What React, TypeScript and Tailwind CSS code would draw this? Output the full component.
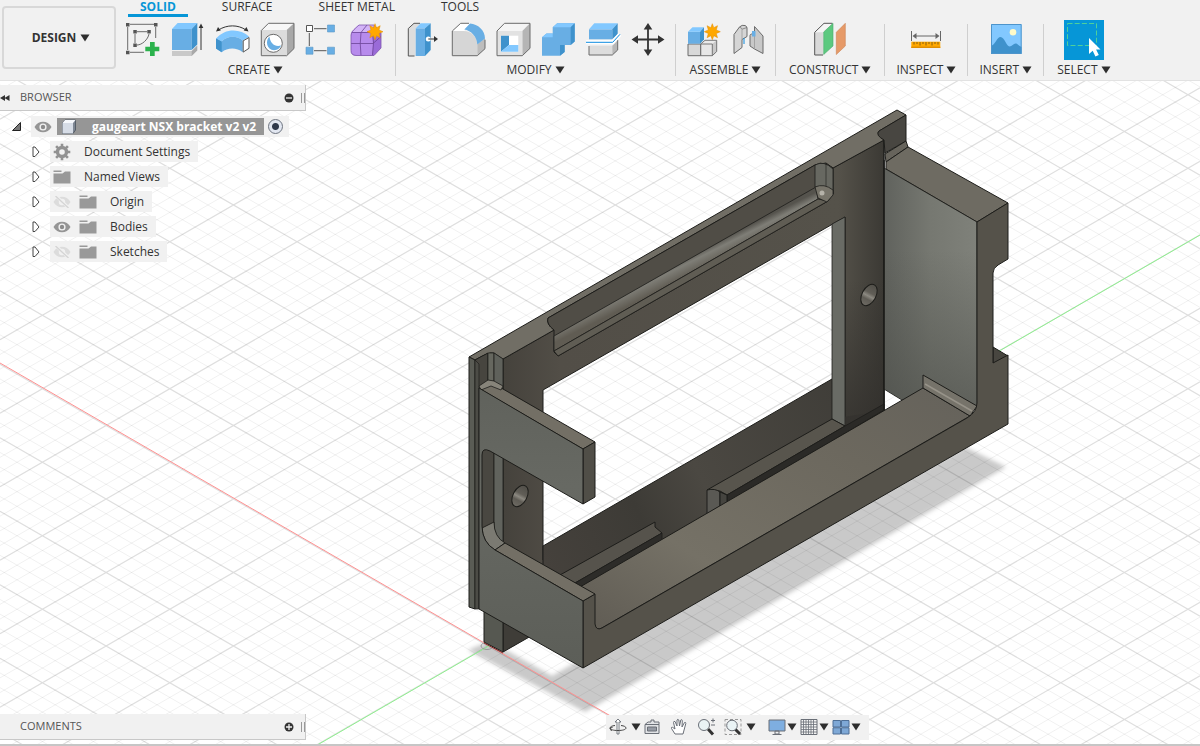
import { ReactElement, ReactNode } from "react";

const BLUE = "#68aee4";
const BLUE_TOP = "#82c8ff";
const BLUE_SIDE = "#3f92cc";
const LINE = "#6b6b6b";

interface IIconProps {
  children: ReactNode;
}

const ToolIcon = ({ children }: IIconProps): ReactElement => (
  <svg viewBox="0 0 36 36" className="w-9 h-9" fill="none" aria-hidden="true">
    {children}
  </svg>
);

const Star = ({ x, y }: { x: number; y: number }): ReactElement => (
  <path
    transform={`translate(${x} ${y})`}
    fill="#ffa800"
    stroke="#e08a00"
    strokeWidth=".5"
    d="M0-8 1.5-4 5.2-6 4-1.8 8 0 4 1.8 5.2 6 1.5 4 0 8-1.5 4-5.2 6-4 1.8-8 0-4-1.8-5.2-6-1.5-4Z"
  />
);

const Caret = (): ReactElement => (
  <svg viewBox="0 0 10 8" className="w-2.5 h-2 shrink-0" aria-hidden="true">
    <path d="M.5.5h9L5 7.5Z" fill="#2e2e2e" />
  </svg>
);

const createIcons = [
  {
    name: "Create Sketch",
    icon: (
      <ToolIcon>
        <path d="M5 2.300h24M2.700 5v23M5 30.300h14M30.700 5v11" stroke={LINE} />
        <path d="M12 9.700h10M10 12v9M24 12C23 17.500 17 23 12 23" stroke={LINE} />
        <path
          d="M1 1h3.500v3.500H1zM29 1h3.500v3.500H29zM1 28.700h3.500v3.500H1zM8.300 8h3.500v3.500H8.300zM22.300 8h3.500v3.500h-3.500zM8.300 21.500h3.500v3.500H8.300z"
          fill="#555"
        />
        <path d="M25 20h4.700v4.700h4.600v4.600h-4.600V34H25v-4.700h-4.700v-4.600H25z" fill="#2bb24c" />
      </ToolIcon>
    ),
  },
  {
    name: "Extrude",
    icon: (
      <ToolIcon>
        <path d="M2 29v5h19.700l5.600-5.600v-5L21.700 29z" fill="#a9a9a9" />
        <path d="M2 29v5h19.700v-5z" fill="#c9c9c9" />
        <path d="M2 7h19.700v21H2z" fill={BLUE} />
        <path d="m2 7 5.600-6h19.700l-5.600 6z" fill={BLUE_TOP} />
        <path d="m21.700 7 5.600-6v21.500l-5.600 5.500z" fill={BLUE_SIDE} />
        <path d="M31 28V5" stroke="#333" />
        <path d="m31 1.500 2.300 4.500h-4.600z" fill="#333" />
      </ToolIcon>
    ),
  },
  {
    name: "Revolve",
    icon: (
      <ToolIcon>
        <path d="M3.500 8C12 2.500 23 2.500 31 8" stroke="#333" />
        <path d="m1 9.500 2-4.500 2.800 3.500zM33.500 9.500l-2-4.500-2.800 3.500z" fill="#333" />
        <path d="M1 16.500C10 6 25 6 34.300 14.700L27.700 18.500c-6-5-15-5-21 1z" fill={BLUE_TOP} />
        <path d="M1 16.500 6.700 19.500c6-6 15-6 21-1v11.800c-6-5-15-5-21 0L1 26.500z" fill={BLUE} />
        <path d="m1 16.500 5.700 3v10.800L1 26.500z" fill={BLUE_SIDE} />
        <path d="m28.200 18.800 5.800-3.300v10.800l-5.800 3.800z" fill="#fff" stroke="#555" />
      </ToolIcon>
    ),
  },
  {
    name: "Hole",
    icon: (
      <ToolIcon>
        <path d="M1.300 8 8.500 1.300H34L26.700 8z" fill="#f7f7f7" />
        <path d="M26.700 8 34 1.300v25.200l-7.300 7.200z" fill="#a8a8a8" />
        <path d="M1.300 8h25.400v25.700H1.300z" fill="#dcdcdc" />
        <path d="M1.300 8.500 8.500 1.300H34v25.200l-7.300 7.200H1.300z" stroke={LINE} />
        <circle cx="13.300" cy="21.300" r="9" fill="#fff" stroke={LINE} />
        <path d="M9.500 14.500c-4.500 4-3 13.500 4.500 13.700 4 0 6-2.200 7-4.700-6 2-11-2.500-11.500-9Z" fill={BLUE} />
      </ToolIcon>
    ),
  },
  {
    name: "Rectangular Pattern",
    icon: (
      <ToolIcon>
        <path d="M9 6.700h12.500M4.300 11v13M9 28.700h12.500" stroke="#555" />
        <path d="M1.500 3.500h6v6h-6z" fill="#fff" stroke="#555" />
        <path d="M22.500 3h7v7h-7zM1 25.200h7v7H1zM22.500 25.200h7v7h-7z" fill={BLUE} stroke="#5a97c6" strokeWidth=".6" />
      </ToolIcon>
    ),
  },
  {
    name: "Create Form",
    icon: (
      <ToolIcon>
        <path d="M9 3h15l7 8v15l-7 7.500H6q-5 0-5-5V13q0-3 3-5.500Z" fill="#9a6bd8" />
        <path d="M9 3h15l-2 7.500H2L5.500 6Q7 3.500 9 3Z" fill="#d3b4f7" />
        <path d="M2 10.500h20q2 9 0 22.500H6.500q-5.500 0-5.500-5.500V14Z" fill="#b78bec" />
        <path d="M1 21.500h22l8-7M11 10.500q-1.500 11 0 23M11 10.500 17 3M22.500 10.500q2 10 0 22.500M2 10.500h20.500" stroke="#6c4497" strokeWidth=".8" />
        <path d="M9 3h15l7 8v15l-7 7.500H6q-5 0-5-5V13q0-3 3-5.500Z" stroke="#7f56ad" strokeWidth=".8" />
        <Star x={25} y={9.7} />
      </ToolIcon>
    ),
  },
];

const modifyIcons = [
  {
    name: "Press Pull",
    icon: (
      <ToolIcon>
        <path d="M3.300 6.500 9 1.300h6.700L10.500 6.500V34H3.300z" fill="#ddd" />
        <path d="M9.500 34H3.300V6.500L9 1.300h6" stroke="#555" />
        <path d="M10.700 6.300H20V34h-9.300z" fill={BLUE} />
        <path d="m10.700 6.300 5-5h10l-5.700 5z" fill={BLUE_TOP} />
        <path d="m20 6.300 5.700-5V28L20 34z" fill={BLUE_SIDE} />
        <circle cx="23.300" cy="17" r="2.500" fill="#fff" />
        <path d="M23.300 17H30" stroke="#333" />
        <path d="M33 17l-4-3v6z" fill="#333" />
      </ToolIcon>
    ),
  },
  {
    name: "Fillet",
    icon: (
      <ToolIcon>
        <path d="M2.300 9 10.700 1.300H20L14.300 9z" fill="#fff" />
        <path d="M2.300 9h11c8 0 14 6 14 13.500v11.200h-25z" fill="#d6d6d6" />
        <path d="m27.300 22.300 7.700-6v10.400l-7.700 7z" fill="#bdbdbd" />
        <path d="m14.300 7.500 5.700-6c8 .5 15 7 15 15l-7.700 6C27 14.500 21 8.500 14.300 7.500Z" fill={BLUE} />
        <path d="M19 1.300h-8.300L2.300 9v24.700h25l7.700-7v-9" stroke={LINE} />
      </ToolIcon>
    ),
  },
  {
    name: "Shell",
    icon: (
      <ToolIcon>
        <path d="M2 9 9.500 1.300H35L27.300 9z" fill="#f5f5f5" />
        <path d="M27.300 9 35 1.300v25l-7.700 7.400z" fill="#b5b5b5" />
        <path d="M2 9h25.300v24.700H2z" fill="#e2e2e2" />
        <path d="M2 9 9.500 1.300H35v25l-7.700 7.400H2z" stroke={LINE} />
        <path d="M6 13.700h17.300v16H6z" fill="#fff" />
        <path d="M6 13.700h8V23l-8 6.700z" fill={BLUE_SIDE} />
        <path d="M14 23h9.300v6.700H6z" fill={BLUE_TOP} />
      </ToolIcon>
    ),
  },
  {
    name: "Combine",
    icon: (
      <ToolIcon>
        <path d="m2 15.300 4.500-3.800h6.200V5.300l4.500-4h17.500v18.200L30.700 23h-6.200v7L20 33.700H2z" fill={BLUE} />
        <path d="m12.700 5.300 4.500-4h17.500l-4 4zM2 15.300l4.500-3.800h6.200v3.800z" fill={BLUE_TOP} />
        <path d="m30.700 5.300 4-4v18.200l-4 3.500zM20 23h4.700v7L20 33.700z" fill={BLUE_SIDE} />
      </ToolIcon>
    ),
  },
  {
    name: "Split Body",
    icon: (
      <ToolIcon>
        <path d="M4 7.300h23.300v10H4z" fill={BLUE} />
        <path d="m4 7.300 5.300-6h23.400l-5.400 6z" fill={BLUE_TOP} />
        <path d="m27.300 7.300 5.400-6V12l-5.400 5.300z" fill={BLUE_SIDE} />
        <path d="M4 23.700h23.300V33H4z" fill="#ddd" />
        <path d="m27.300 23.700 5.400-5.500V28l-5.400 5z" fill="#b7b7b7" />
        <path d="M4 24v9h23.300l5.400-5V18" stroke={LINE} />
        <path d="M1 20.300h26.700L35 12.300" stroke="#fff" strokeWidth="4" />
        <path d="M1 20.300h26.700L35 12.300" stroke="#0d8be0" />
      </ToolIcon>
    ),
  },
  {
    name: "Move/Copy",
    icon: (
      <ToolIcon>
        <path d="M18 5v25M5 17.500h26" stroke="#333" strokeWidth="1.800" />
        <path d="m18 1 4.300 6.500h-8.600zM18 34l4.300-6.500h-8.600zM1.500 17.500 8 13.200v8.600zM34.500 17.500 28 13.200v8.600z" fill="#333" />
      </ToolIcon>
    ),
  },
];

const assembleIcons = [
  {
    name: "New Component",
    icon: (
      <ToolIcon>
        <path d="M3 22h12.700v11.700H3z" fill="#d8d8d8" stroke={LINE} />
        <path d="m15.700 22 4.300-3.700h11.700L27.300 22z" fill="#f7f7f7" />
        <path d="m27.300 22 4.400-3.700v11.200l-4.400 4.200z" fill="#b5b5b5" />
        <path d="M15.700 22h11.600v11.700H15.700zM15.700 22l4.300-3.700h11.700v11.200l-4.400 4.200" fill="#dedede" fillOpacity=".5" stroke={LINE} strokeWidth=".9" />
        <path d="M3 9.700h12v12H3z" fill={BLUE} />
        <path d="M3 9.700 7.500 5.300H19l-4 4.400z" fill={BLUE_TOP} />
        <path d="m15 9.700 4-4.400v12.200l-4 4.200z" fill={BLUE_SIDE} />
        <Star x={27.3} y={9.7} />
      </ToolIcon>
    ),
  },
  {
    name: "Joint",
    icon: (
      <ToolIcon>
        <path d="M4 12.500 9.500 5Q12 2.500 15 3.500q2 .8 2 2.500v8.500l-5 3v8L4 31.500z" fill="#d5d5d5" stroke={LINE} />
        <path d="M12 7v10.500" stroke="#999" strokeWidth=".8" />
        <path d="m9.500 5 3 2 4.500-1.500" stroke={LINE} strokeWidth=".7" />
        <path d="M20 13.500q0-2 4.500-1.500V4.500l8.500 9.500v17.500L24.500 27 20 24z" fill="#c8c8c8" stroke={LINE} />
        <path d="M24.500 12v15" stroke="#999" strokeWidth=".8" />
        <path d="M22 9h3.500v5.500H22z" fill={BLUE} />
        <path d="M14 16v6" stroke="#0d8be0" />
      </ToolIcon>
    ),
  },
];

const constructIcons = [
  {
    name: "Offset Plane",
    icon: (
      <ToolIcon>
        <path d="M2.700 10.300 12 1.300h8.500L11 10.300V33H2.700z" fill="#f5f5f5" />
        <path d="M2.700 10.300H11V33H2.700z" fill="#d9d9d9" />
        <path d="M11 33H2.700V10.300l9.300-9h8.500" stroke="#555" />
        <path d="M11.700 10 21 1.300V24l-9.300 8.500z" fill="#5cc97f" stroke="#49a869" strokeWidth=".6" />
        <path d="M24.300 10.300 33.300 1.300V24l-9 8.500z" fill="#e69a68" stroke="#cb8354" strokeWidth=".6" />
      </ToolIcon>
    ),
  },
];

const inspectIcons = [
  {
    name: "Measure",
    icon: (
      <ToolIcon>
        <path d="M3.500 9v10M32.500 9v10M6 14h24" stroke="#666" />
        <path d="m4.500 14 4-3v6zM31.500 14l-4-3v6z" fill="#666" />
        <path d="M3.300 19.700h29v6.300h-29z" fill="#ffa800" />
        <path d="M3.300 25.300h29" stroke="#df8d00" strokeWidth="1.400" />
        <path d="M6 20v2.500M9 20v2M12 20v3.500M15 20v2M18 20v3.500M21 20v2M24 20v3.500M27 20v2M30 20v2.500" stroke="#6b4c10" strokeWidth=".8" />
      </ToolIcon>
    ),
  },
];

const insertIcons = [
  {
    name: "Canvas",
    icon: (
      <ToolIcon>
        <path d="M3 2h30.500v30H3z" fill="#82c8ff" />
        <path d="M3 24c4-1 6-9 9.500-9 4 0 6 9.500 9 9.500 2.500 0 4-3 6-3s3 2.500 6 3.500v7H3z" fill={BLUE_SIDE} />
        <circle cx="25" cy="10.300" r="3.300" fill="#fffbc9" />
        <path d="M3.500 2.500h29.700v29H3.500z" stroke="#4d94cb" />
      </ToolIcon>
    ),
  },
];

const selectIcons = [
  {
    name: "Select",
    icon: (
      <svg viewBox="0 0 40 40" className="w-10 h-10" fill="none" aria-hidden="true">
        <path d="M0 0h40v40H0z" fill="#0696d7" />
        <path d="M3.500 3.500h29v22h-29z" stroke="#4fd09a" strokeDasharray="5 2.200" />
        <path d="M25 18v16l3.700-3.200 2.700 5.700 3.400-1.600-2.700-5.500h4.400z" fill="#fff" />
      </svg>
    ),
  },
];

const groups = [
  { label: "CREATE", tools: createIcons, pad: "px-[9px]" },
  { label: "MODIFY", tools: modifyIcons, pad: "px-[9px]" },
  { label: "ASSEMBLE", tools: assembleIcons, pad: "px-[9px]" },
  { label: "CONSTRUCT", tools: constructIcons, pad: "px-[13px]" },
  { label: "INSPECT", tools: inspectIcons, pad: "px-[11px]" },
  { label: "INSERT", tools: insertIcons, pad: "px-[11px]" },
  { label: "SELECT", tools: selectIcons, pad: "px-[13px]" },
];

const tabs = ["SOLID", "SURFACE", "SHEET METAL", "TOOLS"];

const Toolbar = (): ReactElement => {
  return (
    <header className="flex bg-[#f1f1f1] border-b border-[#e2e2e2] text-xs text-[#333] relative z-10">
      <button className="ml-0.5 mt-1.5 mb-[11px] w-[114px] h-[63px] shrink-0 rounded border-2 border-[#d8d8d8] flex items-center justify-center gap-1 pl-1 font-bold">
        DESIGN <Caret />
      </button>
      <div className="flex flex-col whitespace-nowrap">
        <nav className="flex gap-[22px] ml-3 h-[17px]">
          {tabs.map((tab, i) => (
            <button
              key={tab}
              className={
                i === 0
                  ? "px-3 leading-[14px] border-b-[3px] border-[#0696d7] text-[#0696d7] font-bold"
                  : "px-3 leading-[14px] border-b-[3px] border-transparent"
              }
            >
              {tab}
            </button>
          ))}
        </nav>
        <div className="flex items-center pt-[3px]">
          {groups.map(({ label, tools, pad }, i) => (
            <div key={label} className="flex items-center">
              {i > 0 && <div className="w-px h-[52px] bg-[#cfcfcf]" />}
              <div className={`flex flex-col items-center ${pad}`}>
                <div className="flex items-center gap-[9px] h-10">
                  {tools.map(({ name, icon }) => (
                    <button key={name} aria-label={name}>
                      {icon}
                    </button>
                  ))}
                </div>
                <button className="flex items-center gap-[3px] h-[19px] leading-[19px]">
                  {label} <Caret />
                </button>
              </div>
            </div>
          ))}
        </div>
      </div>
    </header>
  );
};

const Eye = (): ReactElement => (
  <svg viewBox="0 0 18 12" className="w-[18px] h-3" aria-hidden="true">
    <path d="M.5 6C4-1 14-1 17.500 6 14 13 4 13 .5 6Z" fill="#959595" />
    <circle cx="9" cy="6" r="3.600" fill="#f1f1f1" />
    <circle cx="9" cy="6" r="2.200" fill="#8b8b8b" />
  </svg>
);

const EyeOff = (): ReactElement => (
  <svg viewBox="0 0 18 12" className="w-[18px] h-3" aria-hidden="true">
    <path d="M.5 6C4-1 14-1 17.500 6 14 13 4 13 .5 6Z" fill="#dcdcdc" />
    <circle cx="9" cy="6" r="3.200" fill="#f1f1f1" />
    <path d="m3 0 13 12" stroke="#f1f1f1" strokeWidth="3" />
    <path d="m2.500 0 13 12" stroke="#d4d4d4" strokeWidth="1.300" />
  </svg>
);

const Folder = (): ReactElement => (
  <svg viewBox="0 0 18 14" className="w-[18px] h-3.5" aria-hidden="true">
    <path d="M.5 3.500h9L12 1.500h5.500v12H.5z" fill="#999" />
    <path d="M.5.5h8v1.500h-8z" fill="#999" />
  </svg>
);

const Gear = (): ReactElement => (
  <svg viewBox="0 0 18 18" className="w-[18px] h-[18px]" fill="none" stroke="#929292" aria-hidden="true">
    <circle cx="9" cy="9" r="4.500" strokeWidth="3.400" />
    <path
      d="M9 .7v3M9 14.300v3M.7 9h3M14.300 9h3M3.100 3.100l2.200 2.200M12.700 12.700l2.200 2.200M3.100 14.900l2.200-2.200M12.700 5.300l2.200-2.200"
      strokeWidth="2.600"
    />
  </svg>
);

const Expand = (): ReactElement => (
  <button aria-label="Expand" className="w-[19px] flex items-center pl-px">
    <svg viewBox="0 0 8 12" className="w-2 h-3" aria-hidden="true">
      <path d="M1 1v9.500h2L7 6 3 1z" fill="#fff" stroke="#444" />
    </svg>
  </button>
);

const nodes = [
  { label: "Document Settings", icon: <Gear />, eye: null },
  { label: "Named Views", icon: <Folder />, eye: null },
  { label: "Origin", icon: <Folder />, eye: <EyeOff /> },
  { label: "Bodies", icon: <Folder />, eye: <Eye /> },
  { label: "Sketches", icon: <Folder />, eye: <EyeOff /> },
];

const PanelBar = ({ title, open }: { title: string; open: boolean }): ReactElement => (
  <div className="w-[306px] h-[26px] bg-[#f1f1f1] border-r border-b border-[#c8c8c8] flex items-center text-[11px] text-[#555]">
    <div className="w-5">
      {open && (
        <svg viewBox="0 0 10 8" className="w-2.5 h-2" aria-hidden="true">
          <path d="M5 1v6L0 4zM9.500 1v6l-5-3z" fill="#333" />
        </svg>
      )}
    </div>
    <h2 className="flex-1">{title}</h2>
    <button aria-label={open ? `Collapse ${title}` : `Expand ${title}`}>
      <svg viewBox="0 0 10 10" className="w-2.5 h-2.5" aria-hidden="true">
        <circle cx="5" cy="5" r="4.500" fill="#333" />
        <path d={open ? "M2 5h6" : "M2 5h6M5 2v6"} stroke="#f1f1f1" strokeWidth="1.300" />
      </svg>
    </button>
    <div className="w-1 h-2.5 ml-[7px] border-x border-[#999]" />
  </div>
);

const Browser = (): ReactElement => (
  <aside className="w-[306px] text-xs text-[#333]">
    <PanelBar title="BROWSER" open />
    <ul className="mt-[5px] flex flex-col gap-1">
      <li className="flex items-center h-[21px]">
        <button aria-label="Collapse" className="w-[31px] flex pl-3">
          <svg viewBox="0 0 9 9" className="w-[9px] h-[9px]" aria-hidden="true">
            <path d="M8.500.5v8h-8z" fill="#777" stroke="#222" />
          </svg>
        </button>
        <div className="flex items-center h-full bg-[#f1f1f1] pl-[3px] pr-1.5">
          <button aria-label="Hide component">
            <Eye />
          </button>
          <span className="flex items-center h-[17px] ml-[5px] pl-1 pr-2 bg-[#969696] text-white font-bold whitespace-nowrap">
            <svg viewBox="0 0 16 16" className="w-4 h-4 mr-[15px]" aria-hidden="true">
              <path d="M1.500 4 4 1h10.500v10L12 14.500H1.500z" fill="#7d8693" stroke="#48505c" strokeWidth=".8" />
              <path d="M1.500 4H12v10.500H1.500z" fill="#d6dce6" />
              <path d="M1.500 4 4 1h10.500L12 4z" fill="#f6f8fc" />
            </svg>
            gaugeart NSX bracket v2 v2
          </span>
          <input
            type="radio"
            defaultChecked
            aria-label="Activate component"
            className="appearance-none ml-1 w-[15px] h-[15px] rounded-full border border-[#6d7480] bg-[radial-gradient(circle,#2f3a4c_0_3px,#e2e7f1_4px)]"
          />
        </div>
      </li>
      {nodes.map(({ label, icon, eye }) => (
        <li key={label} className="flex items-center h-[21px] pl-[31px]">
          <Expand />
          <div className="flex items-center h-full bg-[#f1f1f1] pl-[3px] pr-2">
            {eye && (
              <button aria-label={`Toggle ${label}`} className="mr-2">
                {eye}
              </button>
            )}
            {icon}
            <span className="ml-[13px]">{label}</span>
          </div>
        </li>
      ))}
    </ul>
  </aside>
);

const NavTool = ({ name, children }: { name: string; children: ReactNode }): ReactElement => (
  <button aria-label={name}>
    <svg viewBox="0 0 18 18" className="w-[18px] h-[18px]" fill="none" stroke="#6a6f77" aria-hidden="true">
      {children}
    </svg>
  </button>
);

const NavBar = (): ReactElement => (
  <div className="flex items-center h-[25px] pl-[3px] pr-2 bg-[#f1f1f1]">
    <div className="flex items-center gap-1">
      <NavTool name="Orbit">
        <path d="M8 4v12h2V4h2L9 1 6 4z" fill="#fff" strokeWidth=".9" />
        <path d="M6 7.500c-3 .3-5 1.300-5 2.500 0 1.600 3.500 2.500 8 2.500s8-.9 8-2.500c0-1.200-2-2.200-5-2.500M3.500 9.500 1 10l1.500 3" stroke="#444" />
      </NavTool>
      <Caret />
    </div>
    <div className="flex items-center gap-[9px] ml-0.5 mr-1">
      <NavTool name="Look At">
        <path d="M2 6.500 5 4h3V2h3v2h5v2.500" fill="#e1e3e6" />
        <path d="M2 6.500h14v9H2z" fill="#e1e3e6" />
        <path d="M4.500 9h9v4h-9z" fill="#969ba4" />
      </NavTool>
      <NavTool name="Pan">
        <path
          d="M5 16 1.500 10.500q-.5-1.500 1-1.200L5 11 3.500 4.500q0-1.500 1.500-1L7 8V2q1-1.500 1.800 0L9.500 8l1.300-6q1.200-1 1.500.5L12 9l2.500-4.500q1.500-.5 1.300 1L13 16Z"
          fill="#fff"
        />
      </NavTool>
      <NavTool name="Zoom">
        <path d="m11 11 5 5.500" stroke="#333" strokeWidth="3" />
        <circle cx="7" cy="7" r="5.500" fill="#eaf3f5" />
        <path d="M14 2.500h4M16 .5v4M14 7h4" />
      </NavTool>
      <NavTool name="Fit">
        <path d="M1 1.500h16v15H1z" strokeDasharray="3 2" stroke="#999" />
        <path d="m11 11 5 5" stroke="#333" strokeWidth="3" />
        <circle cx="8" cy="7.500" r="5.300" fill="#eaf3f5" />
      </NavTool>
    </div>
    <Caret />
    <div className="flex items-center gap-px ml-3">
      <NavTool name="Display Settings">
        <path d="M1 2h16v11H1z" fill="#7eaee0" />
        <path d="M7 13h4v3H7zM4.500 16.500h9" />
      </NavTool>
      <Caret />
      <span className="w-px" />
      <NavTool name="Grid and Snaps">
        <path d="M1 1.500h16v15H1z" fill="#f4f4f4" />
        <path
          d="M1 4h16M1 6.500h16M1 9h16M1 11.500h16M1 14h16M3.500 1v15.500M6 1v15.500M8.500 1v15.500M11 1v15.500M13.500 1v15.500"
          strokeWidth=".8"
        />
      </NavTool>
      <Caret />
      <span className="w-px" />
      <NavTool name="Viewports">
        <path d="M1 2.500h7.500V9H1zM9.500 2.500H17V9H9.500zM1 9.800h7.500V16H1zM9.500 9.800H17V16H9.500z" fill="#7ea8d6" stroke="#4e6f96" />
      </NavTool>
      <Caret />
    </div>
  </div>
);

// isometric ground grid, the axes cross at (488, 646)
const SLOPE = 0.5774;
const STEP = 14.7;
const steps = Array.from({ length: 150 }, (_, i) => i - 92);

const gridLines = (major: boolean): string =>
  steps
    .filter((k) => (k % 5 === 0) === major)
    .map((k) => {
      const y = 646 + k * STEP;
      const left = 488 * SLOPE;
      const right = 712 * SLOPE;
      return `M0 ${y - left}L1200 ${y + right}M0 ${y + left}L1200 ${y - right}`;
    })
    .join("");

const Viewport = (): ReactElement => (
  <svg
    viewBox="0 81 1200 663"
    preserveAspectRatio="xMinYMin slice"
    className="absolute inset-0 w-full h-full"
    role="img"
    aria-label="Bracket model"
  >
    <defs>
      <linearGradient id="wall" x1="0" x2="1" y1="0" y2="0">
        <stop offset="0" stopColor="#60625d" />
        <stop offset=".5" stopColor="#767871" />
        <stop offset="1" stopColor="#7f817a" />
      </linearGradient>
      <linearGradient id="wallShade" gradientUnits="userSpaceOnUse" x1="0" x2="0" y1="250" y2="410">
        <stop offset="0" stopColor="#4d4f4a" stopOpacity="0" />
        <stop offset="1" stopColor="#4d4f4a" stopOpacity=".65" />
      </linearGradient>
      <linearGradient id="shelf" x1="0" x2="1" y1="1" y2="0">
        <stop offset="0" stopColor="#5f5b53" />
        <stop offset=".3" stopColor="#757166" />
        <stop offset=".7" stopColor="#6c685e" />
        <stop offset="1" stopColor="#65625b" />
      </linearGradient>
      <linearGradient id="plate" gradientUnits="userSpaceOnUse" x1="503" x2="884" y1="0" y2="0">
        <stop offset="0" stopColor="#45423c" />
        <stop offset=".15" stopColor="#524e47" />
        <stop offset=".88" stopColor="#55524a" />
        <stop offset="1" stopColor="#3b3934" />
      </linearGradient>
      <linearGradient id="post" gradientUnits="userSpaceOnUse" x1="0" x2="0" y1="280" y2="410">
        <stop offset="0" stopColor="#2f2d2a" stopOpacity="0" />
        <stop offset="1" stopColor="#2f2d2a" stopOpacity=".65" />
      </linearGradient>
      <linearGradient id="floor" gradientUnits="userSpaceOnUse" x1="543" y1="560" x2="860" y2="400">
        <stop offset="0" stopColor="#45413c" />
        <stop offset=".3" stopColor="#3d3b36" />
        <stop offset=".5" stopColor="#4b4842" />
        <stop offset="1" stopColor="#3f3d38" />
      </linearGradient>
      <linearGradient id="cside" x1="0" x2="0" y1="0" y2="1">
        <stop offset="0" stopColor="#60625c" />
        <stop offset=".35" stopColor="#676963" />
        <stop offset="1" stopColor="#5c5e58" />
      </linearGradient>
      <linearGradient id="groove" gradientUnits="userSpaceOnUse" x1="680" y1="260" x2="688" y2="276">
        <stop offset="0" stopColor="#55534d" />
        <stop offset=".35" stopColor="#7f7e77" />
        <stop offset="1" stopColor="#605c53" />
      </linearGradient>
      <linearGradient id="hole" x1="0" x2="0" y1="0" y2="1">
        <stop offset="0" stopColor="#504e48" />
        <stop offset=".4" stopColor="#625f58" />
        <stop offset=".55" stopColor="#8c8981" />
        <stop offset=".7" stopColor="#5f5c55" />
        <stop offset="1" stopColor="#6d6a63" />
      </linearGradient>
      <filter id="soft" x="-5%" y="-5%" width="110%" height="110%">
        <feGaussianBlur stdDeviation="2" />
      </filter>
    </defs>

    <path d="M0 0h1200v800H0z" fill="#fff" />
    <path d="M468 650 490 641 552 676 583 658 965 447 1006 467 585 712Z" fill="#c9c9c9" filter="url(#soft)" />
    <path d={gridLines(false)} stroke="#000" strokeOpacity=".06" fill="none" />
    <path d={gridLines(true)} stroke="#000" strokeOpacity=".13" strokeWidth="1.200" fill="none" />
    <path d="M0 363 640 733" stroke="#ff9090" />
    <path d="M300 755 1200 235" stroke="#8ef08e" />
    <ellipse cx="487" cy="646" rx="6" ry="3.500" fill="none" stroke="#999" />

    <g stroke="#1d1d1a" strokeWidth="1" strokeLinejoin="round">
      {/* foot */}
      <path d="M503 620 531 636 503 652Z" fill="#3f3d38" />
      <path d="M484 609 503 620V652L484 642Z" fill="#565851" />
      <path d="M484 643 503 653" stroke="#7c2b28" />

      {/* back plate with its window */}
      <path
        fillRule="evenodd"
        d="M503 359 554 330 833 168 884 140V412L600 600 503 550ZM543 390V560L845 424V217Z"
        fill="url(#plate)"
      />
      <path d="M543 546 832 379V419L884 410 600 600 543 590Z" fill="url(#floor)" stroke="none" />
      <path d="M543 546 832 379M543 546V580" fill="none" />
      <path d="M846 280h38v130l-38 22z" fill="url(#post)" stroke="none" />
      <path d="M832 224 845 217V426L832 419Z" fill="#696b65" strokeWidth=".8" />
      <path d="M884 140V410" />

      {/* slot in the top edge */}
      <path
        d="M469 357 897 110 906 115 879 131Q876 134 884 140L833 168 826 164Q820 162 815 165L548 318Q546 324 554 330L503 359 494 353Q490 351 475 360Z"
        fill="#716e65"
      />
      <path d="M548 318 815 165 826 163 833 168V194L828 201 558 356 554 352V330Q546 324 548 318Z" fill="#504d46" />
      <path d="M554 336 816 187 818 199 554 351Z" fill="url(#groove)" strokeWidth=".8" />
      <path d="M554 351 818 199 828 201 558 356Z" fill="#605d54" strokeWidth=".8" />
      <path d="M815 165Q824 160 833 169V194L828 188 815 187Z" fill="#676861" strokeWidth=".8" />
      <path d="M826 164V187" strokeWidth=".6" />
      <path d="M815 187Q824 183 833 190V195L827 202 818 198Z" fill="#77746a" strokeWidth=".8" />
      <circle cx="822" cy="193" r="2.500" fill="#b5b2a9" stroke="none" />

      {/* screw holes */}
      <ellipse cx="869" cy="295" rx="7" ry="11.500" transform="rotate(28 869 295)" fill="url(#hole)" />
      <ellipse cx="520" cy="496" rx="7" ry="11.500" transform="rotate(28 520 496)" fill="url(#hole)" />

      {/* ribs on the inner floor */}
      <path d="M707 490 832 419 845 426 727 495 720 491Z" fill="#58554d" />
      <path d="M727 495 845 426 884 404V410L727 504Z" fill="#2b2a27" strokeWidth=".8" />
      <path d="M707 490Q715 488 720 492V506L707 514Z" fill="#5a5954" />
      <path d="M720 492 727 495V503L720 507Z" fill="#45443f" />
      <path d="M560 575 655 522V527L662 533 575 583Z" fill="#56534c" />
      <path d="M575 583 662 533V540L582 587Z" fill="#2d2c29" strokeWidth=".8" />

      {/* end block */}
      <path d="M879 131 906 115V141L885 153 884 140Q875 135 879 131Z" fill="#484641" />
      <path d="M885 154 906 141 908 147 886 162Z" fill="#67645c" />
      <path d="M886 162 908 147 1008 203 977 222 886 169Z" fill="#6e6b62" />
      <path d="M884 168 977 222V407L902 400 884 389Z" fill="url(#wall)" strokeWidth=".9" />
      <path d="M884 250H976V407L902 399 884 389Z" fill="url(#wallShade)" stroke="none" />
      <path d="M884 160V412" strokeWidth="1.500" />
      <path d="M993 347 1008 356 993 364Z" fill="#484640" />

      {/* shelf and the long outer side */}
      <path d="M580 587 923 388 970 416 600 629Q590 630 588 600Z" fill="url(#shelf)" />
      <path d="M923 375 977 406 970 416 923 388Z" fill="#76736a" />
      <path d="M925 384 972 411" stroke="#979389" strokeWidth="1.500" />
      <path
        d="M583 601 595 594V624Q596 631 602 628L967 418Q977 412 977 403V222L1008 203V259L998 265Q993 268 993 273V363L1008 355V424L583 668Z"
        fill="#55524a"
      />

      {/* left edge, upper arm and C-shaped side */}
      <path d="M475 360 488 353V384L478 388Z" fill="#47453f" />
      <path d="M488 353H494V381L488 382Z" fill="#66675f" strokeWidth=".7" />
      <path d="M494 353 503 359V389L494 383Z" fill="#5f615b" strokeWidth=".8" />
      <path d="M469 357 475 360V609L469 607Z" fill="#5a5c55" />
      <path d="M475 360 479 364V609H475Z" fill="#4c4c46" strokeWidth=".7" />
      <path d="M481 445H494V540L481 530Z" fill="#494741" strokeWidth=".8" />
      <path d="M494 450 503 457V545L494 535Z" fill="#61635d" strokeWidth=".8" />
      <path d="M480 389 490 382 503 389 595 442 583 449Z" fill="#736f65" />
      <path d="M479 386 488 380 494 381 503 386 501 390 491 386 481 390Z" fill="#87847a" strokeWidth=".8" />
      <path d="M583 449 595 442V497L583 504Z" fill="#504e47" />
      <path d="M482 528 494 522Q494 537 505 543L495 550Q483 543 482 528Z" fill="#7b7a72" strokeWidth=".9" />
      <path d="M495 550 505 543 595 594 583 601Z" fill="#736f65" />
      <path
        d="M479 388 583 449V504L490 451Q482 447 482 455V526Q482 542 495 550L583 601V668L479 609Z"
        fill="url(#cside)"
      />
    </g>
  </svg>
);

const App = (): ReactElement => {
  return (
    <div className="min-h-screen flex flex-col font-['Open_Sans','Noto_Sans',sans-serif] bg-white">
      <Toolbar />
      <main className="relative flex-1 flex flex-col justify-between border-b-2 border-[#c6c6c6] overflow-hidden">
        <Viewport />
        <div className="relative pt-1">
          <Browser />
        </div>
        <div className="relative flex items-center gap-[300px] pb-1">
          <PanelBar title="COMMENTS" open={false} />
          <NavBar />
        </div>
      </main>
    </div>
  );
};

export default App;
